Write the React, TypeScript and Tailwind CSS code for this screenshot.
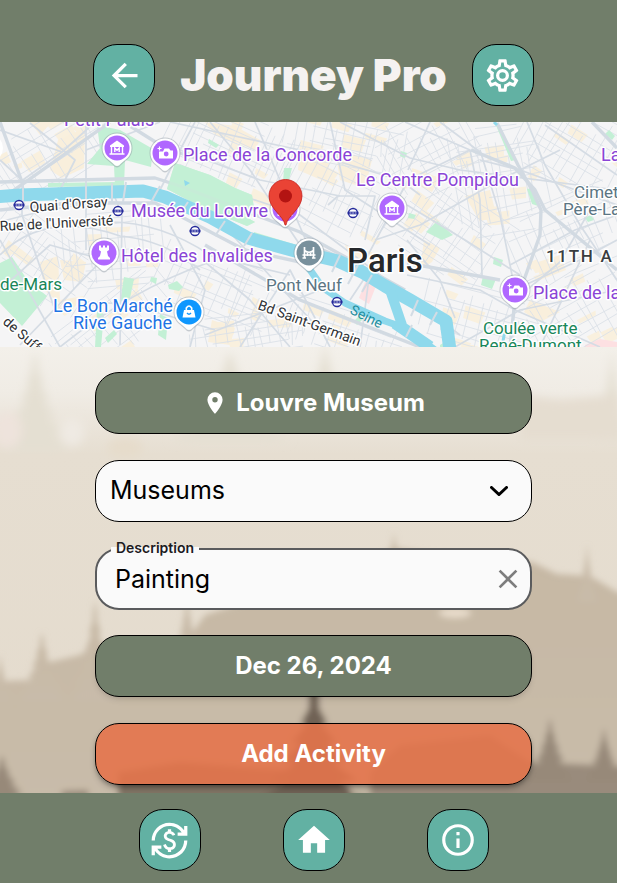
import React from "react";
import { MdCurrencyExchange } from "react-icons/md";

/* ---------- icons ---------- */

const paths = {
  arrowLeft: "M20,11V13H8L13.5,18.5L12.08,19.92L4.16,12L12.08,4.08L13.5,5.5L8,11H20Z",
  cog: "M12,8A4,4 0 0,1 16,12A4,4 0 0,1 12,16A4,4 0 0,1 8,12A4,4 0 0,1 12,8M12,10A2,2 0 0,0 10,12A2,2 0 0,0 12,14A2,2 0 0,0 14,12A2,2 0 0,0 12,10M10,22C9.75,22 9.54,21.82 9.5,21.58L9.13,18.93C8.5,18.68 7.96,18.34 7.44,17.94L4.95,18.95C4.73,19.03 4.46,18.95 4.34,18.73L2.34,15.27C2.21,15.05 2.27,14.78 2.46,14.63L4.57,12.97L4.5,12L4.57,11L2.46,9.37C2.27,9.22 2.21,8.95 2.34,8.73L4.34,5.27C4.46,5.05 4.73,4.96 4.95,5.05L7.44,6.05C7.96,5.66 8.5,5.32 9.13,5.07L9.5,2.42C9.54,2.18 9.75,2 10,2H14C14.25,2 14.46,2.18 14.5,2.42L14.87,5.07C15.5,5.32 16.04,5.66 16.56,6.05L19.05,5.05C19.27,4.96 19.54,5.05 19.66,5.27L21.66,8.73C21.79,8.95 21.73,9.22 21.54,9.37L19.43,11L19.5,12L19.43,13L21.54,14.63C21.73,14.78 21.79,15.05 21.66,15.27L19.66,18.73C19.54,18.95 19.27,19.04 19.05,18.95L16.56,17.95C16.04,18.34 15.5,18.68 14.87,18.93L14.5,21.58C14.46,21.82 14.25,22 14,22H10M11.25,4L10.88,6.61C9.68,6.86 8.62,7.5 7.85,8.39L5.44,7.35L4.69,8.65L6.8,10.2C6.4,11.37 6.4,12.64 6.8,13.8L4.68,15.36L5.43,16.66L7.86,15.62C8.63,16.5 9.68,17.14 10.87,17.38L11.24,20H12.76L13.13,17.39C14.32,17.14 15.37,16.5 16.14,15.62L18.57,16.66L19.32,15.36L17.2,13.81C17.6,12.64 17.6,11.37 17.2,10.2L19.31,8.65L18.56,7.35L16.15,8.39C15.38,7.5 14.32,6.86 13.12,6.62L12.75,4H11.25Z",
  marker: "M12,11.5A2.5,2.5 0 0,1 9.5,9A2.5,2.5 0 0,1 12,6.5A2.5,2.5 0 0,1 14.5,9A2.5,2.5 0 0,1 12,11.5M12,2A7,7 0 0,0 5,9C5,14.25 12,22 12,22C12,22 19,14.25 19,9A7,7 0 0,0 12,2Z",
  home: "M10,20V14H14V20H19V12H22L12,3L2,12H5V20H10Z",
  info: "M11,9H13V7H11M12,20C7.59,20 4,16.41 4,12C4,7.59 7.59,4 12,4C16.41,4 20,7.59 20,12C20,16.41 16.41,20 12,20M12,2A10,10 0 0,0 2,12A10,10 0 0,0 12,22A10,10 0 0,0 22,12A10,10 0 0,0 12,2M11,17H13V11H11V17Z",
  close: "M19,6.41L17.59,5L12,10.59L6.41,5L5,6.41L10.59,12L5,17.59L6.41,19L12,13.41L17.59,19L19,17.59L13.41,12L19,6.41Z",
};

function Icon({ name, className }: { name: keyof typeof paths; className: string }) {
  return (
    <svg viewBox="0 0 24 24" fill="currentColor" className={className} aria-hidden="true">
      <path d={paths[name]} />
    </svg>
  );
}

function SquareButton({ label, children }: { label: string; children: React.ReactNode }) {
  return (
    <button
      type="button"
      aria-label={label}
      className="flex size-[62px] shrink-0 items-center justify-center rounded-3xl border border-black bg-[#62b1a3] text-white"
    >
      {children}
    </button>
  );
}

/* ---------- map ---------- */

function seeded(seed: number) {
  let s = seed;
  return () => {
    s = (s * 16807) % 2147483647;
    return s / 2147483647;
  };
}

// Each district: centre x, centre y, half width, half height, rotation, block size.
const districts = [
  [50, 155, 75, 34, -32, 15],
  [35, 262, 60, 40, 35, 15],
  [110, 250, 55, 38, -6, 14],
  [115, 325, 70, 30, -38, 15],
  [230, 150, 65, 38, 24, 12],
  [215, 290, 60, 36, 22, 14],
  [250, 335, 60, 22, -8, 12],
  [335, 195, 55, 45, 26, 13],
  [345, 140, 60, 30, 12, 13],
  [345, 335, 60, 22, 20, 13],
  [430, 150, 50, 45, -28, 14],
  [445, 235, 60, 45, 34, 14],
  [500, 180, 45, 55, -10, 14],
  [570, 150, 55, 45, 30, 15],
  [570, 235, 60, 40, -24, 15],
  [480, 320, 60, 32, 16, 14],
  [580, 315, 55, 40, -30, 14],
];

function buildStreets() {
  const rand = seeded(4711);
  const streets: string[] = [];
  const blocks: string[] = [];
  districts.forEach(([cx, cy, hw, hh, rot, step]) => {
    const a = (rot * Math.PI) / 180;
    const at = (u: number, v: number) =>
      `${(cx + u * Math.cos(a) - v * Math.sin(a)).toFixed(1)} ${(cy + u * Math.sin(a) + v * Math.cos(a)).toFixed(1)}`;
    for (let v = -hh; v < hh; v += step * (0.4 + rand() * 0.6)) {
      const from = -hw * (0.3 + rand() * 0.7);
      const to = hw * (0.3 + rand() * 0.7);
      streets.push(`M${at(from, v)}L${at(to, v + rand() * 6 - 3)}`);
    }
    for (let u = -hw; u < hw; u += step * (0.4 + rand() * 0.6)) {
      const from = -hh * (0.2 + rand() * 0.8);
      const to = hh * (0.2 + rand() * 0.8);
      streets.push(`M${at(u, from)}L${at(u + rand() * 6 - 3, to)}`);
    }
    for (let i = 0; i < 6; i++) {
      const u = (rand() * 1.7 - 0.9) * hw;
      const v = (rand() * 1.7 - 0.9) * hh;
      const w = 8 + rand() * 18;
      const h = 5 + rand() * 10;
      blocks.push(`M${at(u, v)}L${at(u + w, v + 1)}L${at(u + w - 2, v + h)}L${at(u + 1, v + h - 1)}Z`);
    }
  });
  return { streets: streets.join(""), blocks: blocks.join("") };
}

const cityPlan = buildStreets();

const quarters = [
  "M58 140L85 128L84 168L62 178L50 170Z",
  "M30 122H52L40 135Z",
  "M40 262L58 256L60 300L84 296L70 312L44 290Z",
  "M60 260L86 262L82 282L64 280Z",
  "M205 122L235 126L260 140L255 150L215 135Z",
  "M300 148L330 160L326 182L298 170Z",
  "M335 150L372 160L365 188L340 180Z",
  "M345 245L372 252L378 262L350 258Z",
  "M212 320L235 328L230 345L208 342Z",
  "M412 168L440 178L432 192L410 182Z",
  "M465 196L490 190L496 214L480 222Z",
  "M530 300L560 312L540 322L524 312Z",
  "M538 262L560 255L566 270L540 280Z",
  "M424 240L440 248L432 262L420 270Z",
];

const tuileries = "M175 163L210 175L235 188L252 195L254 208L244 216L255 222L247 226L205 209L167 189Z";

const parks = [
  "M97 125L120 130L153 149L151 167L125 160L124 186L115 186L114 166L87 164L100 148Z",
  "M0 263L12 257L28 281L47 296L22 326L0 303Z",
  "M124 277L134 279L130 298L120 302Z",
  "M151 277L157 278L156 284L150 281Z",
  "M168 285L177 281L183 287L179 291L169 289Z",
  "M160 314L168 318L166 340L158 335Z",
  "M97 311L104 314L101 347L95 347Z",
  "M105 338L114 330L117 334L108 343Z",
  "M284 168L292 168L289 180L283 183Z",
  "M209 139L219 145L216 148L208 143Z",
  "M401 151L407 153L405 158L400 156Z",
  "M354 321L360 315L363 319L357 325Z",
  "M437 221L453 235L442 240L426 232Z",
  "M483 276L496 279L492 289L481 285Z",
  "M494 257L503 260L501 267L493 264Z",
  "M409 213L416 215L414 219L408 218Z",
  "M605 134L609 130L615 136L612 140Z",
  "M585 218L591 215L594 220L588 222Z",
  "M495 123L500 126L516 160L511 161Z",
  "M527 189L531 188L538 206L532 204Z",
  "M48 183L120 182L120 186L48 187Z",
  "M254 232L300 246L298 249L254 236Z",
  "M440 345L448 340L450 347L440 347Z",
];

const mediumRoads = [
  "M0 130L62 152L95 122", "M62 152L20 182", "M60 190L75 160L30 123", "M24 182L0 160",
  "M86 122L86 250", "M86 150L160 122", "M22 182L22 215L55 310", "M0 255Q45 210 120 236Q165 240 200 270",
  "M0 222Q60 205 110 202L150 205", "M110 222Q160 222 210 255", "M0 290L50 245L90 256", "M20 345L100 262",
  "M120 345L122 215L112 190", "M60 347Q130 290 210 262", "M170 225L205 290L190 347", "M200 200L320 330",
  "M85 302L130 304L215 330", "M0 240L60 347", "M160 190L180 150L195 122", "M180 150L260 180L340 196",
  "M210 122L250 170L300 245", "M255 122L310 250", "M170 122L300 150L400 180L420 195", "M330 122L345 190L430 245",
  "M210 185L300 215L400 290L460 335", "M328 205L338 196L375 196L365 240", "M340 122L410 158L460 170L617 190",
  "M470 150L408 180L360 270", "M375 240L420 225L500 180L560 150", "M407 205L465 240L520 275", "M405 122L470 150L480 200L482 275",
  "M480 150L500 215L515 290L510 347", "M527 122L545 165L580 225L617 280", "M440 122L480 152",
  "M407 275L480 290L515 310L600 347", "M510 265L575 230L617 215", "M525 285L580 260L617 240", "M515 300L560 262L590 210",
  "M540 347L590 240", "M455 347L520 310L617 290", "M480 160L520 170L617 205", "M430 122L408 170",
  "M205 262L250 300L290 347", "M240 347L290 270L330 347", "M205 335L320 290L400 330", "M350 300L370 270L360 347",
  "M407 240L440 280L455 318", "M545 125L617 175", "M207 255L290 275",
];

const wideRoads = [
  "M0 182L155 178L180 186L300 232L405 290", "M0 210L70 203L155 203L245 250L300 262",
  "M471 150L515 168L535 190L545 210L617 270", "M497 123L518 165L533 192L541 210L540 235L524 280",
  "M0 122L22 182", "M0 200L110 122", "M592 122L617 148", "M407 263L500 280", "M130 126L165 148L195 158",
  "M205 245L300 300L420 347", "M300 240L350 262L440 315", "M515 300L510 347",
];

const seine = "M-5 197L20 195L143 191L165 197L210 217L248 238L295 251L338 261L362 272L385 286L410 300L446 321L450 350";
const seineSouth = "M306 264L322 287L345 303L385 321L405 328L435 350";

type PinKind = "museum" | "camera" | "castle" | "bridge" | "bag";

const pinGlyphs: Record<PinKind, React.ReactNode> = {
  museum: (
    <>
      <path d="M-7-2.5L0-7.5L7-2.5V-1H-7Z" fill="white" />
      <path d="M-5.5-1V5.5M5.5-1V5.5M-7.5 6H7.5" fill="none" stroke="white" strokeWidth="1.4" />
      <path d="M-2.200 4V0L0 2.200L2.200 0V4" fill="none" stroke="white" strokeWidth="1.4" />
    </>
  ),
  camera: (
    <>
      <path d="M-5.5-1.5H-2L-0.500-4.500H4L5.500-2.500H8V5.500H-6V-1.500Z" fill="white" />
      <circle cx="1.200" cy="1" r="2.400" fill="#b067ff" />
      <path d="M-5.500-6.500V-2.500M-7.500-4.500H-3.500" stroke="white" strokeWidth="1.200" />
    </>
  ),
  castle: (
    <path d="M-5-7.500H-3V-5.500H-1V-7.500H1V-5.500H3V-7.500H5V-3L3-1.500L4 3L6 5V6.500H-6V5L-4 3L-3-1.500L-5-3Z" fill="white" />
  ),
  bridge: (
    <path d="M-4.500-6V5M4.500-6V5M-1.500-1V3M1.500-1V3M-6.500 2H6.500M-4.500-2.500Q0 1 4.500-2.500M-6.500 5H-3M3 5H6.500" fill="none" stroke="white" strokeWidth="1.700" />
  ),
  bag: (
    <>
      <path d="M-5-2H5L6.500 5.500H-6.500Z" fill="white" />
      <path d="M-2.700-1.500V-4Q0-8 2.700-4V-1.500" fill="none" stroke="white" strokeWidth="1.600" />
      <path d="M-2 1Q0 3.500 2 1" fill="none" stroke="#0f97fe" strokeWidth="1.300" />
    </>
  ),
};

function PlacePin({ x, y, kind, fill = "#b067ff" }: { x: number; y: number; kind: PinKind; fill?: string }) {
  return (
    <g transform={`translate(${x} ${y})`}>
      <path d="M0 19.500Q-2 19.500-4 17L-11 11A15.500 15.500 0 1 1 11 11L4 17Q2 19.500 0 19.500Z" fill="#8c96a0" opacity="0.45" />
      <path d="M0 18Q-2 18-4 15.500L-10.500 10A14.500 14.500 0 1 1 10.500 10L4 15.500Q2 18 0 18Z" fill="white" />
      <circle r="12.500" fill={fill} />
      {pinGlyphs[kind]}
    </g>
  );
}

function Station({ x, y }: { x: number; y: number }) {
  return (
    <g transform={`translate(${x} ${y})`}>
      <circle r="4.500" fill="white" stroke="#23289a" strokeWidth="1.300" />
      <path d="M-5.500 0H5.500" stroke="#23289a" strokeWidth="2.600" />
      <path d="M-3.500 0H3.500" stroke="#c9cbea" strokeWidth="1" strokeDasharray="2 0.600" />
    </g>
  );
}

const purple = "#8a44d6";
const sightLabels = [
  { x: 64, y: 126, text: "Petit Palais", fill: purple },
  { x: 183, y: 161, text: "Place de la Concorde", fill: purple },
  { x: 131, y: 217, text: "Musée du Louvre", fill: purple },
  { x: 356, y: 186, text: "Le Centre Pompidou", fill: purple },
  { x: 121, y: 262, text: "Hôtel des Invalides", fill: purple },
  { x: 533, y: 299, text: "Place de la", fill: purple },
  { x: 601, y: 161, text: "La", fill: purple },
  { x: 53, y: 312, text: "Le Bon Marché", fill: "#1f74e4" },
  { x: 73, y: 329, text: "Rive Gauche", fill: "#1f74e4" },
];
const areaLabels = [
  { x: 266, y: 291, text: "Pont Neuf", fill: "#5b7583" },
  { x: 574, y: 198, text: "Cimet", fill: "#5b7583" },
  { x: 563, y: 215, text: "Père-La", fill: "#5b7583" },
  { x: 0, y: 290, text: "de-Mars", fill: "#188659" },
  { x: 483, y: 334, text: "Coulée verte", fill: "#188659" },
  { x: 479, y: 351, text: "René-Dumont", fill: "#188659" },
];

function CityMap() {
  return (
    <svg
      viewBox="0 122 617 225"
      preserveAspectRatio="xMidYMid slice"
      role="img"
      aria-label="Map of Paris"
      className="block h-[225px] w-full font-[Roboto,sans-serif]"
    >
      <rect x="-200" y="0" width="1100" height="500" fill="#f5f5f6" />
      <path d={cityPlan.blocks} fill="#f9f0de" />
      <g fill="#f9efdc">
        {quarters.map((d) => (
          <path key={d} d={d} />
        ))}
      </g>
      <path d="M365 282L376 286L369 304L359 298Z" fill="#fde0e2" />
      <path d="M585 345L600 339L617 342V347H585Z" fill="#fde0e2" />
      <path d={cityPlan.streets} fill="none" stroke="#dbe1e8" strokeWidth="0.900" />
      <g fill="#c3f0d5">
        {parks.map((d) => (
          <path key={d} d={d} />
        ))}
      </g>
      <g fill="none" stroke="#d5dce4" strokeWidth="1.700" strokeLinejoin="round">
        {mediumRoads.map((d) => (
          <path key={d} d={d} />
        ))}
      </g>
      <path d={tuileries} fill="#c3f0d5" />
      <g fill="none" stroke="#d2dae2" strokeWidth="3.400" strokeLinejoin="round">
        {wideRoads.map((d) => (
          <path key={d} d={d} />
        ))}
      </g>
      <path d={tuileries} fill="#c3f0d5" opacity="0.8" />
      <g fill="none" stroke="#8fd9ec" strokeLinejoin="round">
        <path d={seine} strokeWidth="13" />
        <path d={seineSouth} strokeWidth="7" />
        <path d="M390 290L402 325" strokeWidth="10" />
        <path d="M395 323L430 347" strokeWidth="12" />
        <path d="M494 122L497 125M505 330L502 347" strokeWidth="3" />
      </g>
      <path d="M184 180L190 183L185 186Z" fill="#8fd9ec" />
      <path
        d="M23 185L23 205M86 184L86 203M112 183L112 202M126 182L123 202M160 186L150 204M188 202L180 214M225 221L215 236M252 233L244 246M340 255L332 272M358 265L348 284M372 275L362 292M418 300L411 316M437 312L430 325M412 325L406 337"
        stroke="#d3dce4"
        strokeWidth="2"
        fill="none"
      />

      <g stroke="white" strokeWidth="3" strokeLinejoin="round" paintOrder="stroke" className="text-[18px]">
        {sightLabels.map((l) => (
          <text key={l.text} x={l.x} y={l.y} fill={l.fill}>
            {l.text}
          </text>
        ))}
      </g>
      <g stroke="white" strokeWidth="3" strokeLinejoin="round" paintOrder="stroke" className="text-[17px]">
        {areaLabels.map((l) => (
          <text key={l.text} x={l.x} y={l.y} fill={l.fill}>
            {l.text}
          </text>
        ))}
      </g>
      <g fill="#2f3134" stroke="white" strokeWidth="3" strokeLinejoin="round" paintOrder="stroke" className="text-[14px]">
        <text transform="translate(30 212) rotate(-4)">Quai d'Orsay</text>
        <text transform="translate(0 231) rotate(-3)">Rue de l'Université</text>
        <text transform="translate(257 309) rotate(20)">Bd Saint-Germain</text>
        <text transform="translate(2 323) rotate(41)">de Suff</text>
        <text transform="translate(349 313) rotate(27)" fill="#1e8e9e" stroke="none">
          Seine
        </text>
      </g>
      <text x="347" y="272" fill="#26282b" stroke="white" strokeWidth="3" paintOrder="stroke" className="text-[33px] font-medium">
        Paris
      </text>
      <text x="546" y="262" fill="#3a3d40" stroke="white" strokeWidth="3" paintOrder="stroke" className="text-[17px] font-medium tracking-widest">
        11TH A
      </text>

      <circle cx="-11" cy="148" r="14" fill="white" />
      <PlacePin x={117} y={148} kind="museum" />
      <PlacePin x={165} y={153} kind="camera" />
      <PlacePin x={104} y={253} kind="castle" />
      <PlacePin x={189} y={312} kind="bag" fill="#0f97fe" />
      <PlacePin x={285} y={209} kind="museum" />
      <PlacePin x={309} y={253} kind="bridge" fill="#78909c" />
      <PlacePin x={392} y={208} kind="museum" />
      <PlacePin x={515} y={290} kind="camera" />

      <Station x={19} y={205} />
      <Station x={118} y={211} />
      <Station x={195} y={231} />
      <Station x={353} y={213} />
      <Station x={337} y={302} />

      <path d="M285 225C284 216 269 209 269 196A16.500 16.500 0 0 1 302 196C302 209 287 216 286 225Z" fill="#ea4335" stroke="#c5221f" strokeWidth="0.800" />
      <circle cx="285.500" cy="196" r="6.500" fill="#b31412" />
    </svg>
  );
}

/* ---------- misty forest behind the form ---------- */

function fir(x: number, top: number, base: number, spread: number) {
  const tiers = 6;
  const right: string[] = [];
  const left: string[] = [];
  for (let i = 1; i <= tiers; i++) {
    const t = i / tiers;
    const y = top + (base - top) * t;
    const reach = spread * Math.pow(t, 1.3);
    right.push(`L${x + reach} ${y}L${x + reach * 0.6} ${y + 1}`);
    left.unshift(`L${x - reach * 0.6} ${y + 1}L${x - reach} ${y}`);
  }
  return `M${x} ${top}${right.join("")}${left.join("")}Z`;
}

function Forest() {
  return (
    <svg viewBox="0 347 617 446" preserveAspectRatio="none" aria-hidden="true" className="size-full">
      <defs>
        <linearGradient id="mist" x1="0" y1="0" x2="0" y2="1">
          <stop offset="0" stopColor="#f3f0ea" />
          <stop offset="0.1" stopColor="#f0ece5" />
          <stop offset="0.24" stopColor="#e6ded1" />
          <stop offset="1" stopColor="#e4dbcd" />
        </linearGradient>
        <linearGradient id="slope" x1="0" y1="0" x2="0" y2="1">
          <stop offset="0" stopColor="#c6b8a4" />
          <stop offset="1" stopColor="#c9bcaa" />
        </linearGradient>
        <filter id="haze" x="-10%" y="-10%" width="120%" height="120%">
          <feGaussianBlur stdDeviation="3" />
        </filter>
        <filter id="fog" x="-10%" y="-10%" width="120%" height="120%">
          <feGaussianBlur stdDeviation="5" />
        </filter>
      </defs>
      <rect x="0" y="347" width="617" height="446" fill="url(#mist)" />
      <g filter="url(#fog)">
        <g fill="#e4dfd2">
          <path d={fir(35, 350, 450, 34)} />
          <path d={fir(230, 352, 440, 60)} />
          <path d={fir(325, 342, 400, 18)} />
          <path d={fir(612, 350, 440, 18)} />
        </g>
        <path d="M520 395L560 400L620 395V440H520Z" fill="#e5ddd0" />
        <ellipse cx="72" cy="432" rx="12" ry="14" fill="#efeae3" />
        <ellipse cx="8" cy="430" rx="14" ry="18" fill="#eee3dc" />
        <ellipse cx="125" cy="448" rx="18" ry="10" fill="#e6dccb" />
      </g>
      <g filter="url(#haze)">
        <g fill="url(#slope)">
          <path d="M-20 682L30 680L50 662L80 655L95 645L187 640L205 615L370 560L394 548L440 555L532 562L557 574L590 576L617 592L650 600V810H-20Z" />
          <path d={fir(95, 600, 700, 24)} />
          <path d={fir(42, 632, 700, 24)} />
          <path d={fir(0, 655, 700, 12)} />
          <path d={fir(187, 596, 650, 12)} />
          <path d={fir(394, 532, 580, 12)} />
          <path d={fir(587, 545, 600, 10)} />
        </g>
        <ellipse cx="455" cy="613" rx="16" ry="5" fill="#e8dccb" />
        <path d="M370 810V772L400 745L490 735L530 762L617 766L650 770V810Z" fill="#998b7b" />
        <g fill="#978979">
          <path d={fir(550, 718, 780, 24)} />
          <path d={fir(604, 728, 780, 20)} />
          <path d={fir(2, 755, 810, 34)} />
          <path d="M60 810L62 791L88 790L90 810Z" />
        </g>
        <path d="M118 810V772L180 762L260 768L330 770L345 810Z" fill="#827465" />
        <path d={fir(314, 685, 800, 56)} fill="#6f6254" />
        <path d="M309 690H319V720H309Z" fill="#6f6254" />
        <ellipse cx="360" cy="790" rx="10" ry="6" fill="#c9bda9" />
      </g>
    </svg>
  );
}

/* ---------- screen ---------- */

const pill = "flex h-[62px] w-full shrink-0 items-center justify-center rounded-3xl border border-black text-2xl font-bold text-white";

export default function App() {
  return (
    <div className="flex min-h-screen flex-col bg-[#717e6a] font-[Inter,sans-serif]">
      <header className="flex items-center justify-center gap-[25px] pt-11 pb-4 pl-[10px]">
        <SquareButton label="Back">
          <Icon name="arrowLeft" className="size-[39px]" />
        </SquareButton>
        <h1 className="text-[44px] leading-[62px] font-black whitespace-nowrap text-[#f5f2f1]">Journey Pro</h1>
        <SquareButton label="Settings">
          <Icon name="cog" className="size-[39px]" />
        </SquareButton>
      </header>

      <CityMap />

      <main className="grid flex-1 grid-cols-1 overflow-hidden">
        <div className="col-start-1 row-start-1 grid [contain:size]">
          <Forest />
        </div>
        <div className="relative col-start-1 row-start-1 flex justify-center pl-[10px]">
          <form className="flex w-[72%] flex-col justify-between gap-6 pt-[25px] pb-2">
            <button type="button" className={pill + " gap-2 bg-[#717e6a]"}>
              <Icon name="marker" className="size-[26px]" />
              Louvre Museum
            </button>

            <div className="grid items-center">
              <select
                aria-label="Activity type"
                defaultValue="Museums"
                className="col-start-1 row-start-1 h-[62px] w-full appearance-none rounded-3xl border border-black bg-[#fafafa] pr-14 pl-[14px] text-[25px] text-black"
              >
                <option>Museums</option>
              </select>
              <svg viewBox="0 0 18 10" aria-hidden="true" className="pointer-events-none relative col-start-1 row-start-1 mr-6 h-[10px] w-[18px] justify-self-end">
                <path d="M1.500 1.500L9 8.500L16.500 1.500" fill="none" stroke="black" strokeWidth="3" strokeLinecap="round" />
              </svg>
            </div>

            <div className="relative grid items-center">
              <input
                id="description"
                type="text"
                defaultValue="Painting"
                className="col-start-1 row-start-1 h-[62px] w-full rounded-3xl border-2 border-[#5a5b5d] bg-[#fafafa] pr-14 pl-[18px] text-[25px] text-black"
              />
              <label
                htmlFor="description"
                className="absolute -top-2 left-4 bg-[linear-gradient(transparent_45%,#fafafa_45%)] px-[5px] text-[14px] leading-4 font-semibold text-[#1c1b1f]"
              >
                Description
              </label>
              <button type="button" aria-label="Clear description" className="relative col-start-1 row-start-1 mr-2 justify-self-end text-[#7d7d7d]">
                <Icon name="close" className="size-8" />
              </button>
            </div>

            <button type="button" className={pill + " bg-[#717e6a] shadow-md"}>
              Dec 26, 2024
            </button>
            <button type="submit" className={pill + " bg-[#e4744b]/90 shadow-md shadow-black/30"}>
              Add Activity
            </button>
          </form>
        </div>
      </main>

      <nav className="flex h-[90px] items-center justify-center gap-[82px] pt-1 pl-[10px]">
        <SquareButton label="Currency exchange">
          <MdCurrencyExchange className="size-[39px]" />
        </SquareButton>
        <SquareButton label="Home">
          <Icon name="home" className="size-[38px]" />
        </SquareButton>
        <SquareButton label="About">
          <Icon name="info" className="size-[38px]" />
        </SquareButton>
      </nav>
    </div>
  );
}
